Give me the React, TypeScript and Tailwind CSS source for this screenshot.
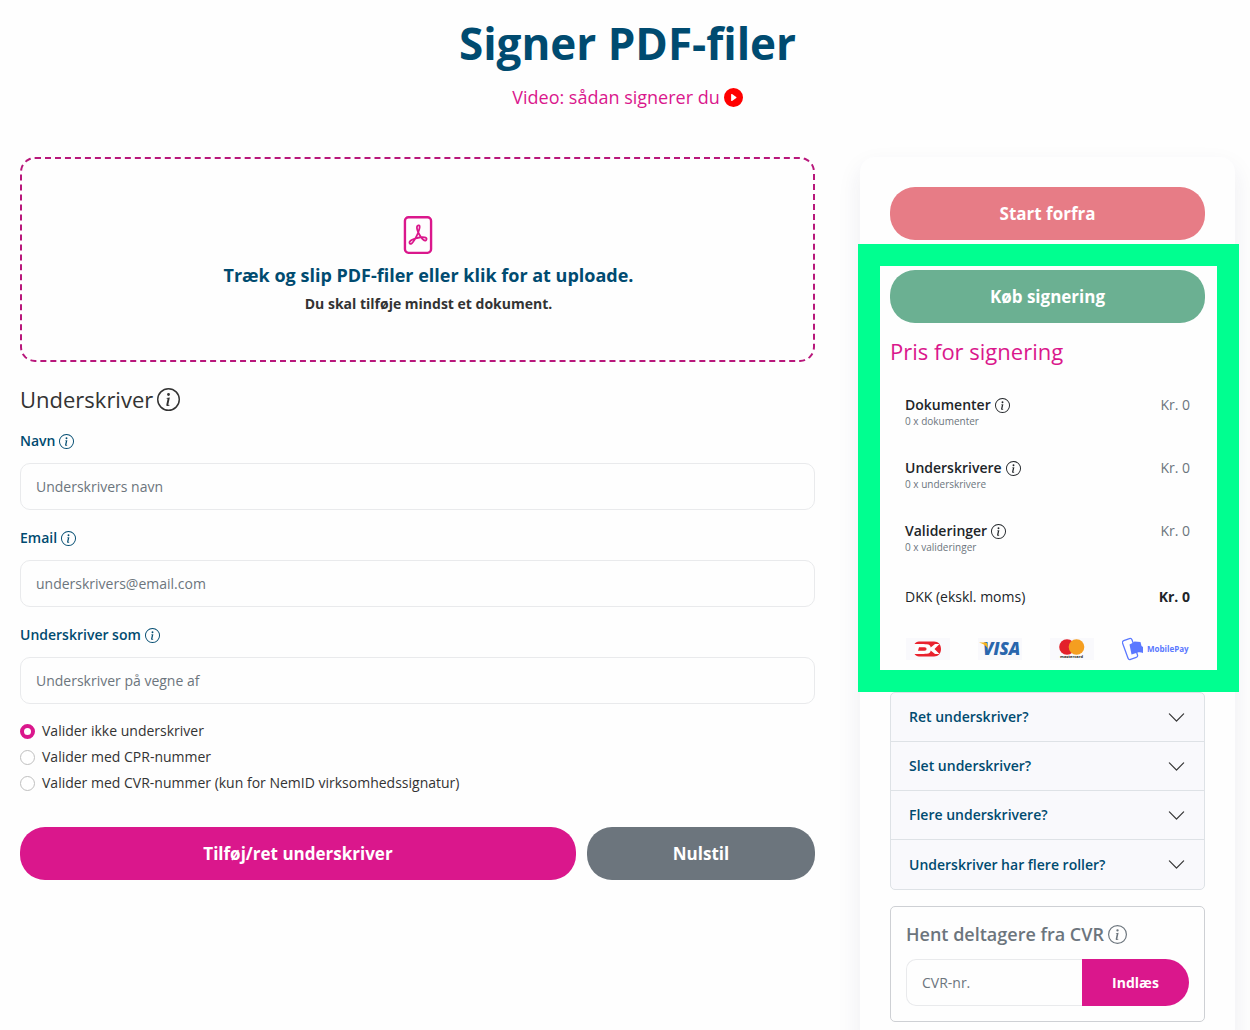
import React, { useState } from 'react';
import { BsChevronDown, BsFilePdf, BsInfoCircle, BsPlayCircleFill } from 'react-icons/bs';

interface FieldProps {
  id: string;
  label: string;
  placeholder: string;
  type?: string;
}

const fields: FieldProps[] = [
  { id: 'name', label: 'Navn', placeholder: 'Underskrivers navn' },
  { id: 'email', label: 'Email', placeholder: 'underskrivers@email.com', type: 'email' },
  { id: 'behalf', label: 'Underskriver som', placeholder: 'Underskriver på vegne af' },
];

const validations = [
  { value: 'none', label: 'Valider ikke underskriver' },
  { value: 'cpr', label: 'Valider med CPR-nummer' },
  { value: 'cvr', label: 'Valider med CVR-nummer (kun for NemID virksomhedssignatur)' },
];

const prices = [
  { name: 'Dokumenter', detail: '0 x dokumenter' },
  { name: 'Underskrivere', detail: '0 x underskrivere' },
  { name: 'Valideringer', detail: '0 x valideringer' },
];

const questions = [
  'Ret underskriver?',
  'Slet underskriver?',
  'Flere underskrivere?',
  'Underskriver har flere roller?',
];

const Field: React.FC<FieldProps> = ({ id, label, placeholder, type = 'text' }) => {
  return (
    <div className="flex flex-col gap-3">
      <label htmlFor={id} className="flex items-center gap-1 text-[14px] leading-5 font-semibold text-[#004b70]">
        {label}
        <BsInfoCircle className="w-[15px] h-[15px]" />
      </label>
      <input
        id={id}
        type={type}
        placeholder={placeholder}
        className="w-full h-[47px] px-[15px] border border-[#e9eaec] rounded-[10px] bg-transparent text-[14px] placeholder:text-[#6c757d]"
      />
    </div>
  );
};

const PaymentLogos: React.FC = () => {
  return (
    <div className="flex items-center justify-between pl-4 pr-[15px]">
      <svg viewBox="0 0 44 22" className="w-[44px] h-[22px]" role="img" aria-label="Dankort">
        <rect width="44" height="22" fill="#f9f9fc" />
        <path d="M13 3.500h15c4.500 0 7 3 7 7.500s-2.500 7.500-7 7.500H13c-2 0-3.500-1-4.500-2.500h10V6h-10c1-1.500 2.500-2.500 4.500-2.500z" fill="#e9222e" />
        <path d="M9 6.300h11.500c3 0 4 1.700 4.200 3.200L29 6h4.500l-5 5 5 5H29l-4.300-3.500c-.2 1.500-1.200 3.200-4.200 3.200H9z" fill="#fefefe" />
        <path d="M13 9.300h5.500c1.500 0 2 .7 2 1.700s-.5 1.700-2 1.700h-6.500z" fill="#e9222e" />
      </svg>
      <svg viewBox="0 0 44 22" className="w-[44px] h-[22px]" role="img" aria-label="Visa">
        <rect width="44" height="22" fill="#f9f9fc" />
        <text x="5" y="17" fill="#2966ad" fontFamily="Open Sans" fontSize="17" fontWeight="800" fontStyle="italic">VISA</text>
        <path d="M1 4.500h6c1.500 0 2 .5 2.300 1.500L10 10.500C8 7.500 5 5.500 1 4.500z" fill="#f9b51b" />
      </svg>
      <svg viewBox="0 0 44 22" className="w-[44px] h-[22px]" role="img" aria-label="Mastercard">
        <rect width="44" height="22" fill="#f9f9fc" />
        <circle cx="17" cy="9" r="7.800" fill="#e3202b" />
        <circle cx="26.500" cy="9" r="7.800" fill="#f59e20" />
        <text x="10" y="20" fill="#222" fontFamily="Open Sans" fontSize="4" fontWeight="700">mastercard</text>
      </svg>
      <svg viewBox="0 0 68 24" className="w-[68px] h-[24px]" role="img" aria-label="MobilePay">
        <rect x="3" y="2" width="10" height="20" rx="2" transform="rotate(-20 8 12)" fill="none" stroke="#5a78ff" strokeWidth="1.300" />
        <path d="M7.500 7.500l3-1.500 2-1.500 6 .5 1 4 1.500 1v6c-2-.8-4-.8-6-.3l-5.500 1.800z" fill="#5a78ff" />
        <text x="25" y="15" fill="#5a78ff" fontFamily="Open Sans" fontSize="8" fontWeight="700">MobilePay</text>
      </svg>
    </div>
  );
};

const App: React.FC = () => {
  const [validation, setValidation] = useState('none');

  return (
    <div className="min-h-screen bg-[#fefefe] pl-5 pr-[15px] text-[14px] leading-5 text-[#212529] font-['Open_Sans','Noto_Sans',sans-serif]">
      <header className="flex flex-col items-center pt-[15px] gap-[14px]">
        <h1 className="text-[44px] leading-[56px] font-bold text-[#004b70]">Signer PDF-filer</h1>
        <a href="#video" className="flex items-center gap-1 text-[18px] leading-6 text-[#da178c]">
          Video: sådan signerer du
          <BsPlayCircleFill className="w-[19px] h-[19px] text-[#ff0000]" />
        </a>
      </header>

      <main className="flex items-start gap-[45px] mt-12">
        <form className="flex-1 min-w-0" onSubmit={(e) => e.preventDefault()}>
          <label className="flex flex-col items-center h-[205px] pt-[57px] border-2 border-dashed border-[#b8177b] rounded-[15px] cursor-pointer">
            <input type="file" accept="application/pdf" multiple className="sr-only" />
            <BsFilePdf className="w-[38px] h-[38px] text-[#da178c]" />
            <span className="mt-[9px] pl-[22px] text-[18px] leading-6 font-bold text-[#004b70]">
              Træk og slip PDF-filer eller klik for at uploade.
            </span>
            <span className="mt-[7px] pl-[22px] font-bold text-[#333]">Du skal tilføje mindst et dokument.</span>
          </label>

          <h2 className="flex items-center gap-1 mt-[22px] text-[22px] leading-[30px] font-medium text-[#333]">
            Underskriver
            <BsInfoCircle className="w-[23px] h-[23px]" />
          </h2>

          <div className="flex flex-col gap-[18px] mt-[17px]">
            {fields.map((field) => (
              <Field key={field.id} {...field} />
            ))}
          </div>

          <fieldset className="mt-[14px]">
            {validations.map((v) => (
              <label key={v.value} className="flex items-center gap-[7px] h-[26px] text-[#333]">
                <input
                  type="radio"
                  name="validation"
                  value={v.value}
                  checked={validation === v.value}
                  onChange={() => setValidation(v.value)}
                  className="appearance-none w-[15px] h-[15px] rounded-full border border-[#bfbfbf] bg-white checked:border-4 checked:border-[#da178c]"
                />
                {v.label}
              </label>
            ))}
          </fieldset>

          <div className="grid grid-cols-[39fr_16fr] gap-[11px] mt-[31px] text-[17px] font-bold text-white">
            <button type="submit" className="h-[53px] rounded-[25px] bg-[#da178c]">Tilføj/ret underskriver</button>
            <button type="reset" className="h-[53px] rounded-[25px] bg-[#6c757d]">Nulstil</button>
          </div>
        </form>

        <aside className="w-[375px] shrink-0 p-[30px] rounded-[15px] bg-[#fefefe] shadow-[0_10px_24px_rgba(40,40,90,0.08)]">
          <button className="block w-full h-[53px] rounded-[25px] bg-[#e77c86] text-[17px] font-bold text-white">Start forfra</button>

          <section className="relative mt-[30px]">
            <div className="absolute -top-[26px] -bottom-[31px] -left-[32px] -right-[34px] border-[22px] border-[#00ff90] pointer-events-none" />
            <button className="block w-full h-[53px] rounded-[25px] bg-[#6bb092] text-[17px] font-bold text-white">Køb signering</button>
            <h2 className="mt-[13px] text-[22px] leading-[30px] font-medium text-[#da178c]">Pris for signering</h2>
            <div className="px-[15px] mt-[29px]">
              <table className="w-full">
                <tbody>
                  {prices.map((price) => (
                    <tr key={price.name} className="h-[63px] align-top">
                      <th scope="row" className="text-left font-semibold">
                        <span className="flex items-center gap-1">
                          {price.name}
                          <BsInfoCircle className="w-[15px] h-[15px]" />
                        </span>
                        <span className="block text-[10px] leading-[13px] font-normal text-[#6c757d]">{price.detail}</span>
                      </th>
                      <td className="text-right text-[#6c757d]">Kr. 0</td>
                    </tr>
                  ))}
                </tbody>
                <tfoot>
                  <tr>
                    <th scope="row" className="pt-[3px] text-left font-normal">DKK (ekskl. moms)</th>
                    <td className="pt-[3px] text-right font-bold">Kr. 0</td>
                  </tr>
                </tfoot>
              </table>
            </div>
            <div className="mt-[30px]">
              <PaymentLogos />
            </div>
          </section>

          <div className="mt-[31px] border border-[#dee2e6] rounded-[5px] bg-[#f9f9fc] divide-y divide-[#dee2e6]">
            {questions.map((question) => (
              <button key={question} className="flex items-center justify-between w-full h-[49px] px-[18px] font-semibold text-[#004b70]">
                {question}
                <BsChevronDown className="w-[19px] h-[19px] text-[#333]" />
              </button>
            ))}
          </div>

          <div className="mt-4 p-[15px] border border-[#ced0d4] rounded-[5px]">
            <label htmlFor="cvr" className="flex items-center gap-1 text-[18px] leading-6 font-semibold text-[#6c757d]">
              Hent deltagere fra CVR
              <BsInfoCircle className="w-[19px] h-[19px]" />
            </label>
            <div className="flex mt-[13px]">
              <input
                id="cvr"
                type="text"
                placeholder="CVR-nr."
                className="flex-1 min-w-0 h-[47px] px-[15px] border border-r-0 border-[#e9eaec] rounded-l-[10px] bg-transparent placeholder:text-[#6c757d]"
              />
              <button className="w-[107px] h-[47px] rounded-r-[25px] bg-[#da178c] font-bold text-white">Indlæs</button>
            </div>
          </div>
        </aside>
      </main>
    </div>
  );
};

export default App;
